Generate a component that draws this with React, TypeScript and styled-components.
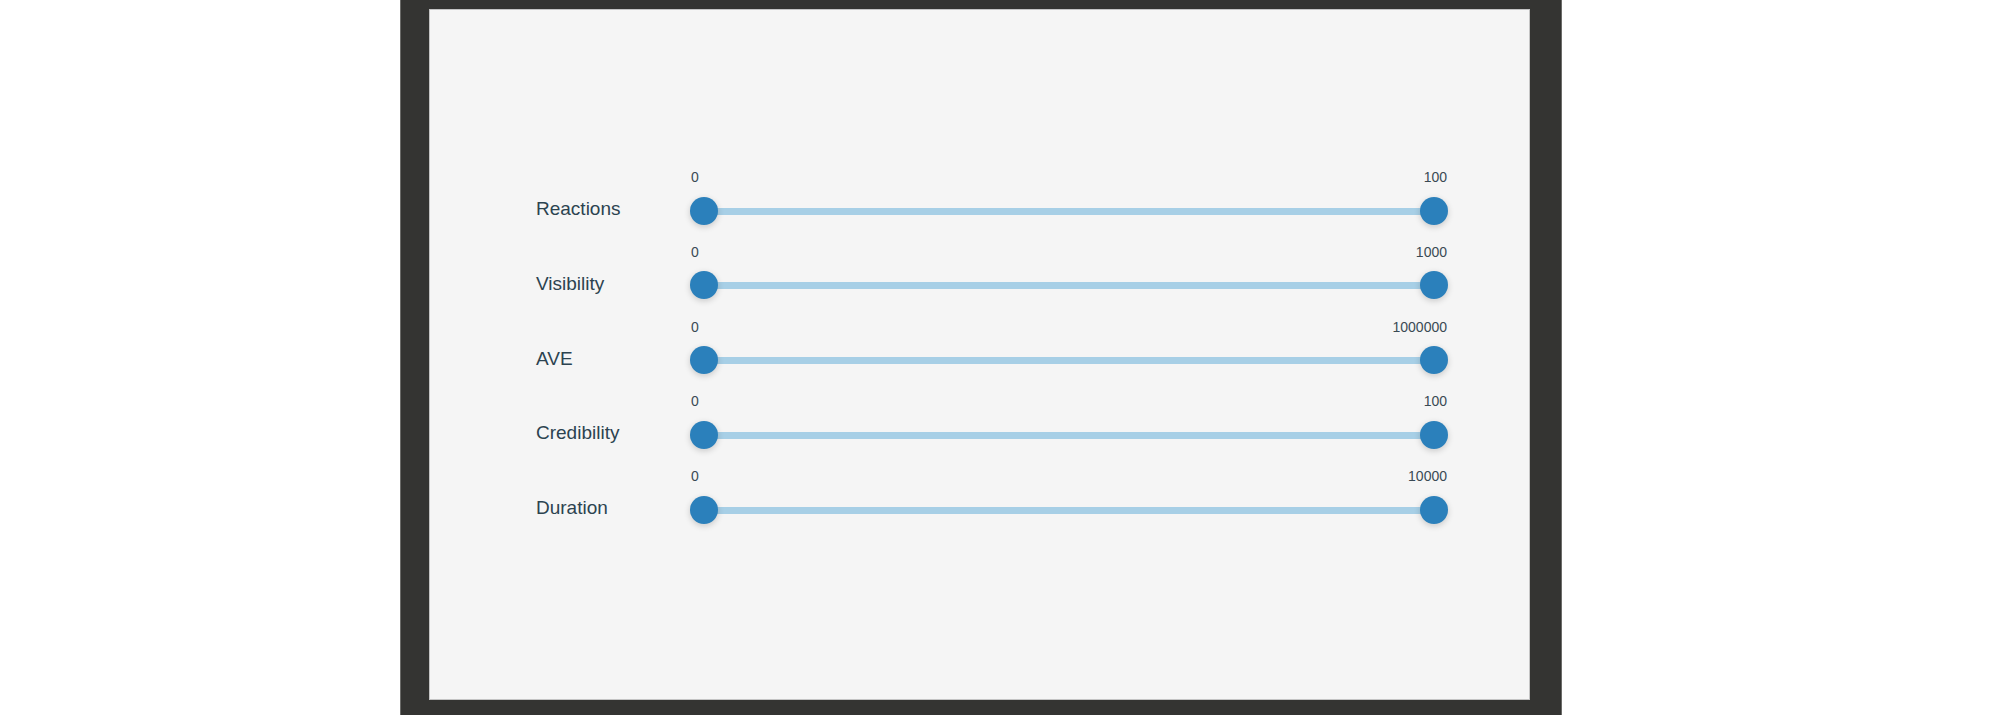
import React from "react";
import styled, { createGlobalStyle } from "styled-components";

const GlobalStyle = createGlobalStyle`
  html, body {
    margin: 0;
    padding: 0;
    background: #ffffff;
    font-family: "Liberation Sans", Arial, Helvetica, sans-serif;
  }
`;

type Range = { label: string; min: number; max: number };

const ranges: Range[] = [
  { label: "Reactions", min: 0, max: 100 },
  { label: "Visibility", min: 0, max: 1000 },
  { label: "AVE", min: 0, max: 1000000 },
  { label: "Credibility", min: 0, max: 100 },
  { label: "Duration", min: 0, max: 10000 },
];

const RangeRow = ({ label, min, max }: Range) => {
  return (
    <Row>
      <Label>{label}</Label>
      <SliderWrap>
        <Values>
          <span>{min}</span>
          <span>{max}</span>
        </Values>
        <Slider>
          <Track />
          <Thumb $side="left" />
          <Thumb $side="right" />
        </Slider>
      </SliderWrap>
    </Row>
  );
};

const App = () => {
  return (
    <>
      <GlobalStyle />
      <Page>
        <Frame>
          <Panel>
            {ranges.map((r) => (
              <RangeRow key={r.label} {...r} />
            ))}
          </Panel>
        </Frame>
      </Page>
    </>
  );
};

export default App;

const Page = styled.div`
  width: 2000px;
  height: 715px;
  overflow: hidden;
  display: flex;
  padding-left: 400px;
  box-sizing: border-box;
`;

const Frame = styled.div`
  width: 1162px;
  height: 715px;
  box-sizing: border-box;
  background-color: #343432;
  border-left: 1px solid #6b6b69;
  border-right: 1px solid #6b6b69;
  padding: 9px 31px 15px 28px;
`;

const Panel = styled.div`
  height: 100%;
  box-sizing: border-box;
  background-color: #f5f5f5;
  border: 1px solid #c4c4c4;
  padding: 159px 0 0 106px;
  display: flex;
  flex-direction: column;
`;

const Row = styled.div`
  display: grid;
  grid-template-columns: 154px 758px;
  height: 74.8px;
`;

const Label = styled.div`
  font-size: 19px;
  color: #2c4350;
  padding-top: 29px;
  line-height: 22px;
`;

const SliderWrap = styled.div`
  display: flex;
  flex-direction: column;
`;

const Values = styled.div`
  display: flex;
  justify-content: space-between;
  font-size: 14px;
  line-height: 16px;
  color: #3a4a54;
  height: 16px;
  padding: 0 1px;
  margin-bottom: 11.5px;
`;

const Slider = styled.div`
  position: relative;
  height: 28px;
`;

const Track = styled.div`
  position: absolute;
  left: 14px;
  right: 14px;
  top: 11px;
  height: 7px;
  background-color: #a7cfe6;
`;

const Thumb = styled.div<{ $side: "left" | "right" }>`
  position: absolute;
  top: 0;
  ${(p) => (p.$side === "left" ? "left: 0;" : "right: 0;")}
  width: 28px;
  height: 28px;
  border-radius: 50%;
  background-color: #2b80bb;
  box-shadow: 0 2px 6px rgba(0, 0, 0, 0.18);
`;
